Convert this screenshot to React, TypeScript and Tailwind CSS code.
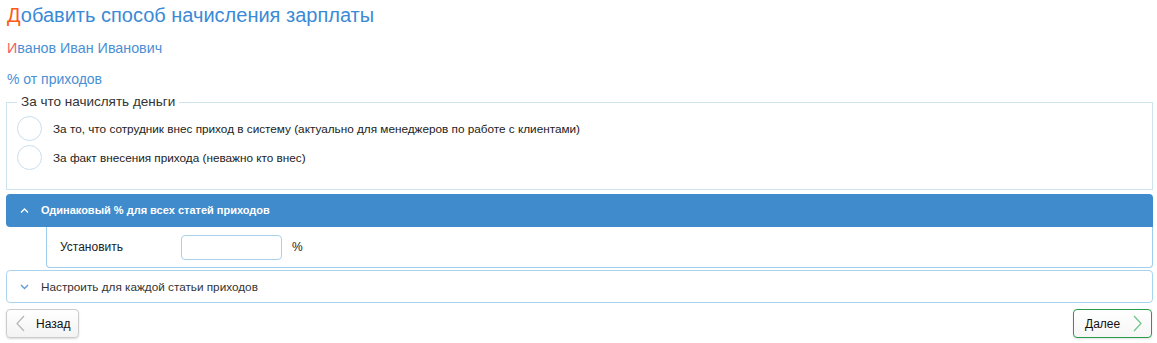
const font = { fontFamily: '"Liberation Sans", Arial, sans-serif' }

function Chevron({ dir, className }: { dir: 'left' | 'right'; className?: string }) {
  // thin tall chevron used on the nav buttons
  const d = dir === 'left' ? 'M8 1 L1 8.5 L8 16' : 'M1 1 L8 8.5 L1 16'
  return (
    <svg width="9" height="17" viewBox="0 0 9 17" className={className}>
      <path d={d} fill="none" stroke="currentColor" strokeWidth="1.2" />
    </svg>
  )
}

function SmallChevron({ up, className }: { up?: boolean; className?: string }) {
  const d = up ? 'M1 5.5 L4.5 2 L8 5.5' : 'M1 2 L4.5 5.5 L8 2'
  return (
    <svg width="9" height="7" viewBox="0 0 9 7" className={className}>
      <path d={d} fill="none" stroke="currentColor" strokeWidth="1.3" />
    </svg>
  )
}

export default function App() {
  return (
    <div className="w-[1157px] h-[343px] bg-white pl-[6px] pr-[4px] pt-[3px]" style={font}>
      {/* Title */}
      <h1 className="pl-[1px] text-[20px] leading-[24px] text-[#3b8ad6]">
        <span className="text-[#ff5a14]">Д</span>обавить способ начисления зарплаты
      </h1>
      <div className="pl-[1px] mt-[13px] text-[14.3px] leading-[16px] text-[#4a8fd4]">
        <span className="text-[#f2605c]">И</span>ванов Иван Иванович
      </div>
      <div className="pl-[1px] mt-[15px] text-[14px] leading-[16px] text-[#4a8fd4]">% от приходов</div>

      {/* Fieldset */}
      <fieldset className="mt-[7px] border border-[#cfe3ee] px-[10px] pt-0 h-[96px]">
        <legend className="px-[4px] text-[13.5px] leading-[16px] text-[#333]">За что начислять деньги</legend>
        <div className="flex flex-col gap-[4px] mt-[6px]">
          <label className="flex items-center gap-[11px]">
            <span className="w-[25px] h-[25px] rounded-full border border-[#c9dfee] bg-white" />
            <span className="text-[11.75px] text-[#222]">
              За то, что сотрудник внес приход в систему (актуально для менеджеров по работе с клиентами)
            </span>
          </label>
          <label className="flex items-center gap-[11px]">
            <span className="w-[25px] h-[25px] rounded-full border border-[#c9dfee] bg-white" />
            <span className="text-[11.75px] text-[#222]">За факт внесения прихода (неважно кто внес)</span>
          </label>
        </div>
      </fieldset>

      {/* Accordion: same % */}
      <div className="mt-[4px]">
        <div className="h-[33px] bg-[#3f8bcc] rounded-l-[4px] rounded-tr-[4px] flex items-center pl-[14px]">
          <SmallChevron up className="text-white" />
          <span className="ml-[12px] text-[11px] font-bold text-white">Одинаковый % для всех статей приходов</span>
        </div>
        <div className="ml-[40px] h-[41px] border border-t-0 border-[#9fcdee] rounded-b-[4px] flex items-center pl-[13px]">
          <span className="w-[121px] text-[12px] text-[#222]">Установить</span>
          <input className="w-[101px] h-[25px] border border-[#a9d1ea] rounded-[4px] outline-none" />
          <span className="ml-[10px] text-[12px] text-[#222]">%</span>
        </div>
      </div>

      {/* Accordion: each item */}
      <div className="mt-[2px] h-[33px] border border-[#a9d4f0] rounded-[4px] flex items-center pl-[13px]">
        <SmallChevron className="text-[#5a9ad6]" />
        <span className="ml-[12px] text-[11.75px] text-[#333]">Настроить для каждой статьи приходов</span>
      </div>

      {/* Buttons */}
      <div className="mt-[6px] flex justify-between">
        <button className="h-[29px] w-[73px] flex items-center pl-[9px] border border-[#cccccc] rounded-[4px] bg-gradient-to-b from-white to-[#f3f3f3] shadow-[0_1px_2px_rgba(0,0,0,0.15)]">
          <Chevron dir="left" className="text-[#b5b5b5]" />
          <span className="ml-[11px] text-[12px] text-[#111]">Назад</span>
        </button>
        <button className="mr-[1px] h-[29px] w-[79px] flex items-center pl-[11px] border border-[#2a9a4c] rounded-[4px] bg-gradient-to-b from-white to-[#f6f6f6] shadow-[0_1px_2px_rgba(0,0,0,0.12)]">
          <span className="text-[12px] text-[#111]">Далее</span>
          <Chevron dir="right" className="ml-[13px] text-[#6cc488]" />
        </button>
      </div>
    </div>
  )
}
